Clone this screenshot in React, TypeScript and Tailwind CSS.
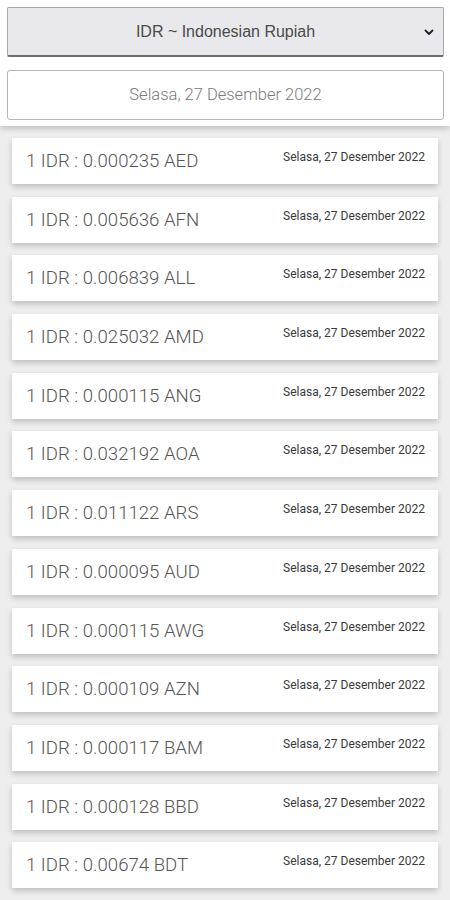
import React from 'react';

const rates: [string, string][] = [
  ['0.000235', 'AED'],
  ['0.005636', 'AFN'],
  ['0.006839', 'ALL'],
  ['0.025032', 'AMD'],
  ['0.000115', 'ANG'],
  ['0.032192', 'AOA'],
  ['0.011122', 'ARS'],
  ['0.000095', 'AUD'],
  ['0.000115', 'AWG'],
  ['0.000109', 'AZN'],
  ['0.000117', 'BAM'],
  ['0.000128', 'BBD'],
  ['0.00674', 'BDT'],
];

const dateText = 'Selasa, 27 Desember 2022';

const App: React.FC = () => {
  return (
    <div className="h-[900px] w-[450px] overflow-hidden bg-white font-['Roboto','Liberation_Sans',sans-serif]">
      <div className="relative z-10 flex flex-col gap-[13px] bg-white pl-[7px] pr-[6px] pt-[7px] pb-[6px] shadow-[0_3px_6px_rgba(0,0,0,0.18)]">
        <div className="relative flex h-[50px] items-center justify-center rounded-[2px] border border-[#a9a9ad] border-b-2 border-b-[#6b6b70] bg-[#e9e9ed]">
          <span className="text-[16px] text-[#4a4a4a] font-['Liberation_Sans',sans-serif]">
            IDR ~ Indonesian Rupiah
          </span>
          <svg
            className="absolute right-[8px] top-1/2 -translate-y-1/2"
            width="12"
            height="12"
            viewBox="0 0 12 12"
            fill="none"
          >
            <path d="M2.5 4.5 6 8l3.5-3.5" stroke="#222" strokeWidth="1.8" strokeLinecap="round" strokeLinejoin="round" />
          </svg>
        </div>
        <div className="flex h-[50px] items-center justify-center rounded-[3px] border border-[#b5b5b5] bg-white">
          <span className="text-[16.5px] font-light text-[#7a7a7a]">{dateText}</span>
        </div>
      </div>

      <div className="flex flex-col gap-[12.7px] bg-[#eeeeee] px-[12px] pt-[12px] pb-[20px]">
        {rates.map(([value, code]) => (
          <div
            key={code}
            className="flex h-[46px] items-center justify-between bg-white pl-[14px] pr-[13px] shadow-[0_3px_6px_rgba(0,0,0,0.2)]"
          >
            <span className="mt-[2px] text-[18.6px] font-light text-[#555]">
              1 IDR : {value} {code}
            </span>
            <span className="-mt-[8px] text-[12px] text-[#3a3a3a]">
              {dateText}
            </span>
          </div>
        ))}
      </div>
    </div>
  );
};

export default App;
